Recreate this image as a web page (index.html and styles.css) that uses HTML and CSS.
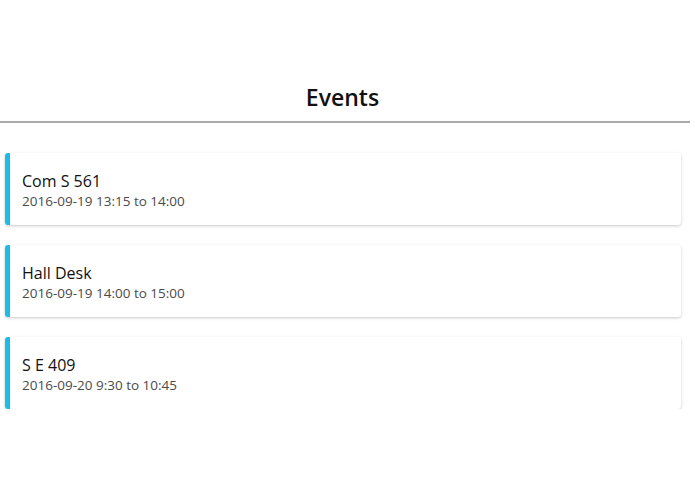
FILE: index.html
```html
<!DOCTYPE html>
<html>
<head>
<meta charset="utf-8">
<link rel="stylesheet" href="styles.css">
</head>
<body>
<div class="page">
  <header class="header">
    <h1 class="title">Events</h1>
  </header>
  <div class="list">
    <div class="card">
      <div class="name">Com S 561</div>
      <div class="time">2016-09-19 13:15 to 14:00</div>
    </div>
    <div class="card">
      <div class="name">Hall Desk</div>
      <div class="time">2016-09-19 14:00 to 15:00</div>
    </div>
    <div class="card">
      <div class="name">S E 409</div>
      <div class="time">2016-09-20 9:30 to 10:45</div>
    </div>
  </div>
</div>
</body>
</html>
```

FILE: styles.css
```css
html, body {
  margin: 0;
  padding: 0;
  background: #fff;
}
body {
  font-family: "Open Sans", "Noto Sans", sans-serif;
  color: #111;
}
.page {
  width: 690px;
}
.header {
  height: 123px;
  box-sizing: border-box;
  border-bottom: 2px solid #aaa;
  display: flex;
  align-items: flex-end;
  justify-content: center;
  padding-right: 5px;
}
.title {
  margin: 0 0 8px;
  font-size: 23px;
  font-weight: 600;
  line-height: 32px;
  color: #111;
}
.list {
  padding: 30px 9px 0 5px;
  display: flex;
  flex-direction: column;
  gap: 20px;
}
.card {
  height: 72px;
  box-sizing: border-box;
  border-left: 5px solid #1ebbe8;
  border-radius: 3px;
  background: #fff;
  box-shadow: 0 1px 3px rgba(0,0,0,0.22);
  padding: 17px 12px 0;
}
.name {
  font-size: 16px;
  line-height: 22px;
  color: #111;
}
.time {
  font-size: 13.5px;
  line-height: 18px;
  color: #4a4a4a;
  font-weight: 500;
}
```
